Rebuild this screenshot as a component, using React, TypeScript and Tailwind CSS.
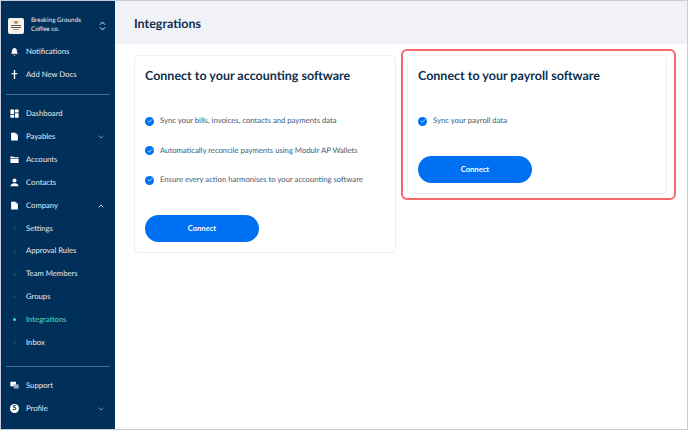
import { ChevronDown, ChevronUp, Check } from "lucide-react";
import type { ReactNode } from "react";

const FONT = "font-['Lato','Noto_Sans',sans-serif] [text-rendering:geometricPrecision]";

function BellIcon() {
  return (
    <svg viewBox="0 0 12 12" className="size-[9px]" fill="#fff">
      <path d="M6 1a.8.8 0 0 1 .8.8c1.7.4 2.4 1.7 2.4 3.4 0 1.6.5 2.4 1.3 3.1v.7H1.5v-.7c.8-.7 1.3-1.5 1.3-3.1 0-1.7.7-3 2.4-3.4A.8.8 0 0 1 6 1Z" />
      <path d="M4.8 10.2h2.4a1.2 1.2 0 0 1-2.4 0Z" />
    </svg>
  );
}

function PlusIcon() {
  return (
    <svg viewBox="0 0 12 12" className="size-[9px]" fill="#fff">
      <rect x="5.1" y="0" width="1.8" height="12" />
      <rect x="2" y="4.2" width="8" height="1.5" />
    </svg>
  );
}

function GridIcon() {
  return (
    <svg viewBox="0 0 12 12" className="size-[9px]" fill="#fff">
      <rect x="0.5" y="0.5" width="5" height="6" rx="0.6" />
      <rect x="6.5" y="0.5" width="5" height="4" rx="0.6" />
      <rect x="0.5" y="7.5" width="5" height="4" rx="0.6" />
      <rect x="6.5" y="5.5" width="5" height="6" rx="0.6" />
    </svg>
  );
}

function DocIcon() {
  return (
    <svg viewBox="0 0 12 12" className="size-[9px]" fill="#fff">
      <path d="M1.5 1h6l3 3v7.4h-9Z" />
      <path d="M7.4 1v3.1h3.1Z" fill="#9fb2c4" />
    </svg>
  );
}

function FolderIcon() {
  return (
    <svg viewBox="0 0 12 12" className="size-[9px]" fill="#fff">
      <path d="M0.5 2h4l1 1h6v1.2H0.5Z" />
      <rect x="0.5" y="5" width="11" height="5.5" rx="0.4" />
    </svg>
  );
}

function PersonIcon() {
  return (
    <svg viewBox="0 0 12 12" className="size-[9px]" fill="#fff">
      <circle cx="6" cy="3.4" r="2.6" />
      <path d="M0.8 11c0-2.6 2-4 5.2-4s5.2 1.4 5.2 4Z" />
    </svg>
  );
}

function ChatIcon() {
  return (
    <svg viewBox="0 0 12 12" className="size-[9px]">
      <rect x="0.5" y="1" width="7.5" height="6" fill="#fff" />
      <rect x="5" y="4.5" width="6.5" height="5.5" fill="#9fb2c4" />
    </svg>
  );
}

function ProfileIcon() {
  return (
    <span className="flex size-[9px] items-center justify-center rounded-full bg-white text-[7px] font-bold leading-none text-[#00305a]">
      S
    </span>
  );
}

function SelectorIcon() {
  return (
    <svg viewBox="0 0 10 14" className="h-[10px] w-[7px]" fill="none" stroke="#fff" strokeWidth="1.3">
      <path d="M1.5 5 5 1.5 8.5 5" />
      <path d="M1.5 9 5 12.5 8.5 9" />
    </svg>
  );
}

function Logo() {
  return (
    <div className="flex h-[16px] w-[16px] flex-col items-center justify-center gap-[1px] rounded-[2px] bg-[#f6f3ee]">
      <span className="h-[3px] w-[4px] rounded-b-full bg-[#c98f5a]" />
      <span className="h-[1px] w-[10px] bg-[#6b5a50]" />
      <span className="h-[1px] w-[10px] bg-[#6b5a50]" />
      <span className="h-[1px] w-[6px] bg-[#c58a66]" />
    </div>
  );
}

function NavRow({ icon, label, chevron }: { icon: ReactNode; label: string; chevron?: "up" | "down" }) {
  return (
    <div className="flex h-[23px] items-center pl-[9px] pr-[10px] text-[7.7px] text-[#e6ecf2]">
      <span className="flex w-[16px] shrink-0 items-center">{icon}</span>
      <span className="flex-1">{label}</span>
      {chevron === "down" && <ChevronDown className="size-[8px] text-[#b8c6d3]" strokeWidth={2} />}
      {chevron === "up" && <ChevronUp className="size-[8px] text-white" strokeWidth={2.5} />}
    </div>
  );
}

function SubRow({ label, active }: { label: string; active?: boolean }) {
  return (
    <div className={`flex h-[22.85px] items-center text-[7.7px] ${active ? "text-[#45e0c2]" : "text-[#e6ecf2]"}`}>
      <span className={`-ml-[2px] size-[3px] rounded-full ${active ? "bg-[#45e0c2]" : "bg-[#15446c]"}`} />
      <span className="ml-[10px]">{label}</span>
    </div>
  );
}

function Sidebar() {
  return (
    <aside className="flex h-full w-[114px] shrink-0 flex-col bg-[#00305a]">
      <div className="flex items-center pl-[7px] pr-[9px] pt-[16px]">
        <Logo />
        <div className="ml-[7px] flex-1 text-[6.4px] leading-[8.5px] text-[#e6ecf2]">
          <div>Breaking Grounds</div>
          <div>Coffee co.</div>
        </div>
        <SelectorIcon />
      </div>
      <div className="mt-[6px]">
        <NavRow icon={<BellIcon />} label="Notifications" />
        <NavRow icon={<PlusIcon />} label="Add New Docs" />
      </div>
      <div className="mx-[5px] mt-[8px] h-px bg-[#4a6c8a]" />
      <div className="mt-[7px]">
        <NavRow icon={<GridIcon />} label="Dashboard" />
        <NavRow icon={<DocIcon />} label="Payables" chevron="down" />
        <NavRow icon={<FolderIcon />} label="Accounts" />
        <NavRow icon={<PersonIcon />} label="Contacts" />
        <NavRow icon={<DocIcon />} label="Company" chevron="up" />
        <div className="ml-[13px] border-l border-[#07375f] pb-[5px]">
          <SubRow label="Settings" />
          <SubRow label="Approval Rules" />
          <SubRow label="Team Members" />
          <SubRow label="Groups" />
          <SubRow label="Integrations" active />
          <SubRow label="Inbox" />
        </div>
      </div>
      <div className="mx-[5px] mt-[7px] h-px bg-[#4a6c8a]" />
      <div className="mt-[7px]">
        <NavRow icon={<ChatIcon />} label="Support" />
        <NavRow icon={<ProfileIcon />} label="Profile" chevron="down" />
      </div>
    </aside>
  );
}

function Tick() {
  return (
    <span className="flex size-[9px] shrink-0 items-center justify-center rounded-full bg-[#0070f3]">
      <Check className="size-[6px] text-white" strokeWidth={3} />
    </span>
  );
}

function Card({ title, items }: { title: string; items: string[] }) {
  return (
    <section className="rounded-[4px] border border-[#eef0f6] bg-white pb-[10px] pl-[10px] pr-[10px] pt-[12px]">
      <h2 className="text-[12.5px] font-bold leading-[16px] text-[#0d2f4f]">{title}</h2>
      <ul className="mt-[32px] flex flex-col gap-[19.5px]">
        {items.map((item) => (
          <li key={item} className="flex h-[10px] items-center gap-[6px] whitespace-nowrap text-[7.7px] text-[#405a73]">
            <Tick />
            {item}
          </li>
        ))}
      </ul>
      <button className="mt-[30px] flex h-[27px] w-[114px] items-center justify-center rounded-full bg-[#0070f3] text-[7.6px] font-bold text-white">
        Connect
      </button>
    </section>
  );
}

export default function App() {
  return (
    <div className={`flex h-[430px] w-[688px] overflow-hidden border border-[#c9cadb] bg-white ${FONT}`}>
      <Sidebar />
      <main className="flex-1">
        <header className="flex h-[43px] items-center bg-[#f0f2f7] pl-[19px] pt-[3px] text-[12.5px] font-bold text-[#0d2f4f]">
          Integrations
        </header>
        <div className="flex items-start pl-[19px] pt-[5px]">
          <div className="mt-[6px] w-[262px]">
            <Card
              title="Connect to your accounting software"
              items={[
                "Sync your bills, invoices, contacts and payments data",
                "Automatically reconcile payments using Modulr AP Wallets",
                "Ensure every action harmonises to your accounting software",
              ]}
            />
          </div>
          <div className="ml-[5px] w-[275px] rounded-[6px] border-2 border-[#f8686c] py-[4px] pl-[4px] pr-[7px]">
            <Card title="Connect to your payroll software" items={["Sync your payroll data"]} />
          </div>
        </div>
      </main>
    </div>
  );
}
